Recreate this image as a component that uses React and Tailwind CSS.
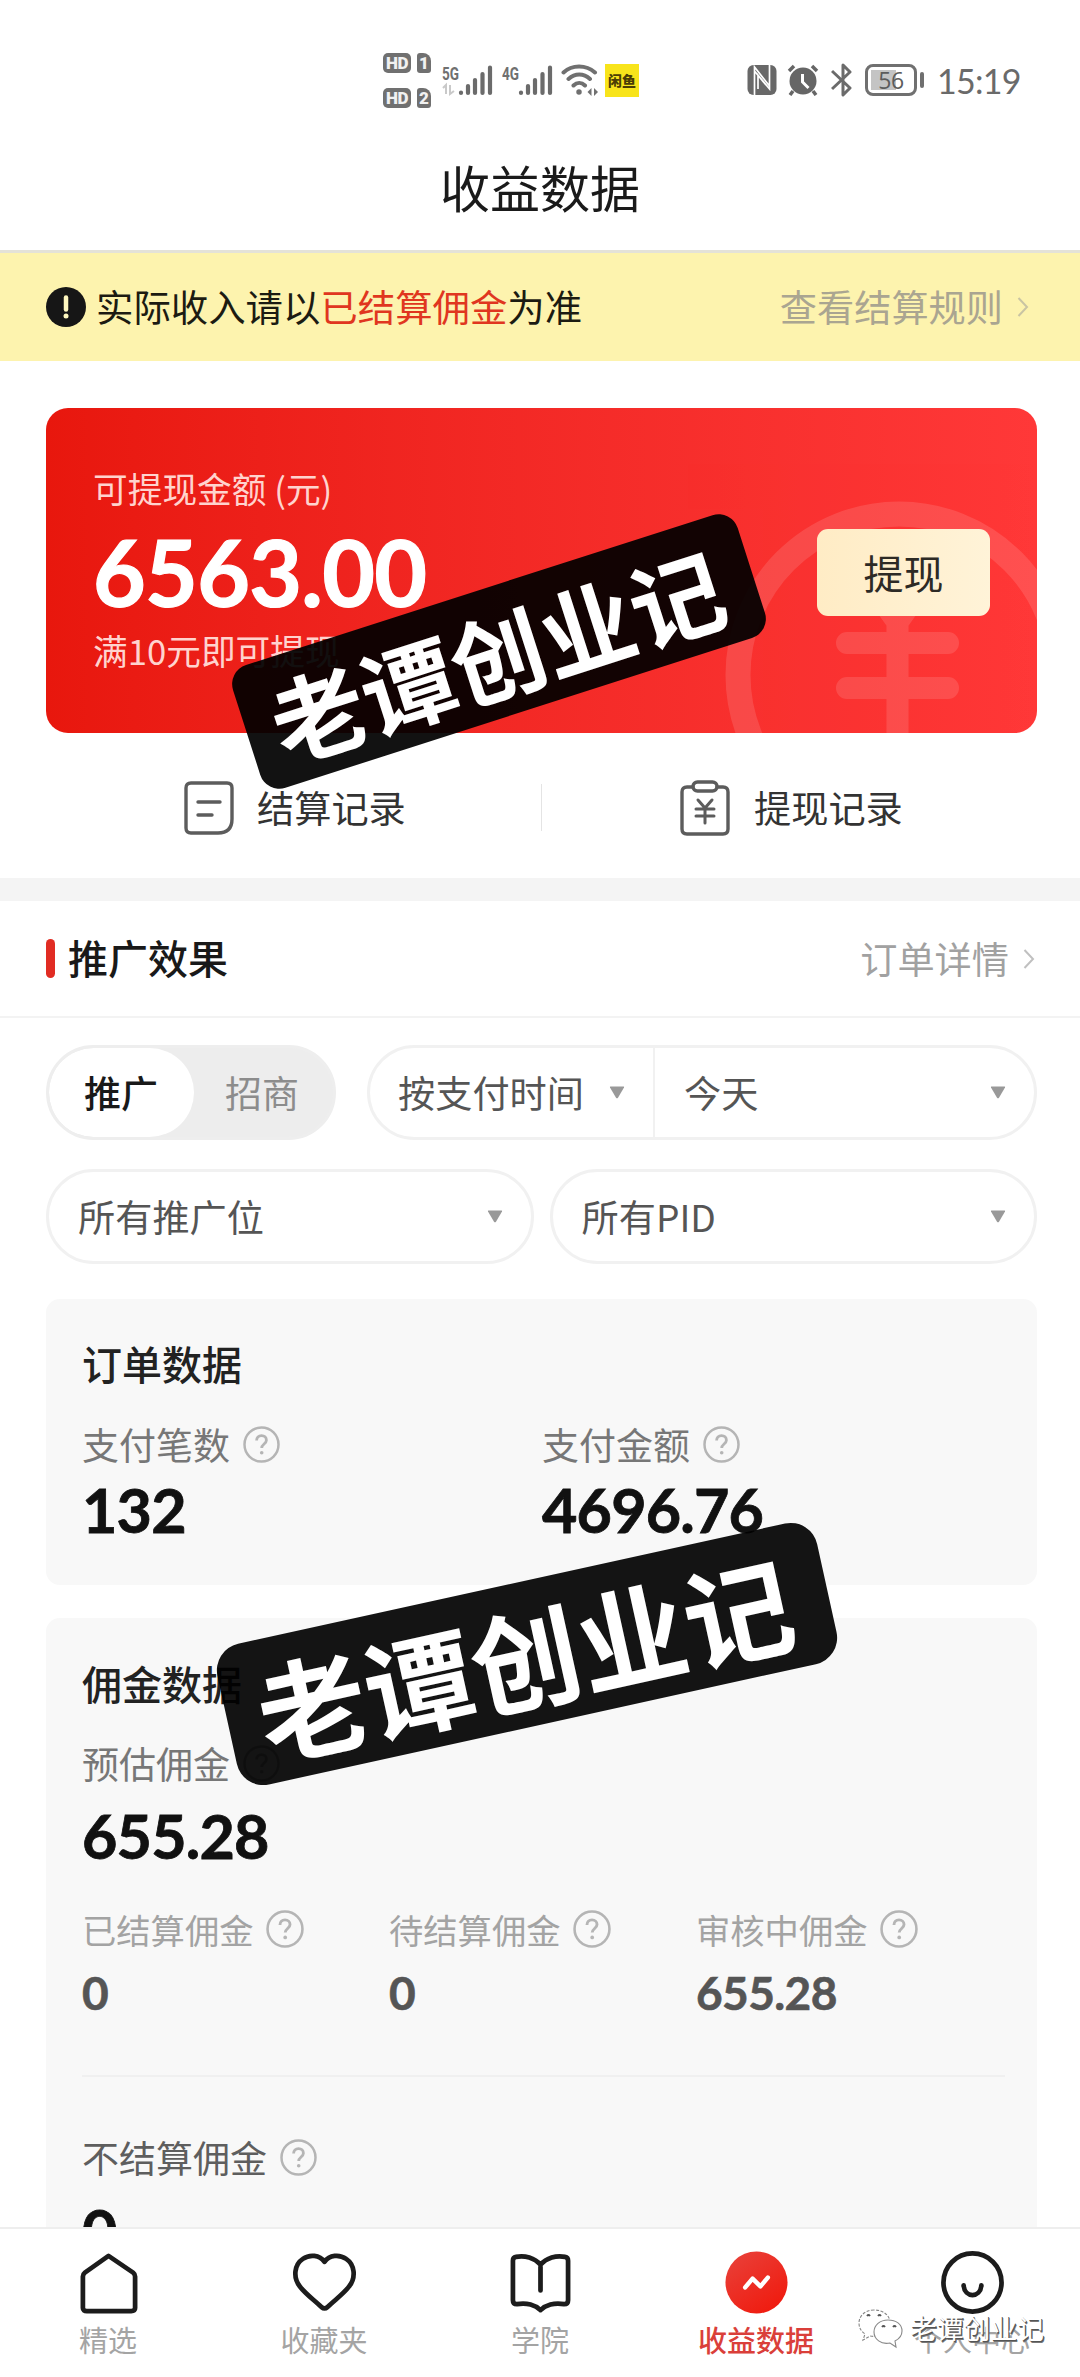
import React from "react";

const Help = ({ className = "ml-[13px] size-[37px]" }) => (
  <svg viewBox="0 0 37 37" className={`shrink-0 ${className}`} fill="none" stroke="#b5b5b5" strokeWidth="2.5">
    <circle cx="18.5" cy="18.5" r="17" />
    <path d="M13.6 14.6c0-3 2-5 4.9-5s4.900 1.900 4.900 4.600c0 3.600-4.700 4.100-4.700 7.800" strokeWidth="2.800" />
    <circle cx="18.700" cy="26.700" r="1.800" fill="#b5b5b5" stroke="none" />
  </svg>
);

const Chevron = ({ stroke }) => (
  <svg viewBox="0 0 12 20" className="ml-[14px] h-5 w-3" fill="none" stroke={stroke} strokeWidth="2">
    <path d="M1.5 1l8.5 9-8.5 9" />
  </svg>
);

const Caret = () => (
  <svg viewBox="0 0 16 13" className="h-[13px] w-4 shrink-0">
    <path d="M1.5 0.5h13q1 0 .5 1L9 11.700q-1 1.200-2 0L1 1.500q-.5-1 .5-1z" fill="#999" />
  </svg>
);

const HdBadge = ({ n }) => (
  <div className="flex gap-[6px] font-['Roboto'] text-[17px] leading-[20px] font-black text-[#f1f1f1]">
    <span className="h-5 w-7 rounded-[5px] bg-[#707070] text-center tracking-[-0.5px]">HD</span>
    <span className="h-5 w-[14px] rounded-[3px] rounded-tr-[8px] bg-[#707070] text-center">{n}</span>
  </div>
);

const Signal = ({ label, arrows }) => (
  <svg viewBox="0 0 51 32" className="h-8 w-[51px]">
    <text x="0" y="15.500" fontSize="18" fontWeight="700" fontFamily="Roboto, sans-serif" textLength="17" lengthAdjust="spacingAndGlyphs" fill="#707070">
      {label}
    </text>
    {arrows && <path d="M1 24l3-3v9M8 21v9l4-3" fill="none" stroke="#c9c9c9" strokeWidth="2" />}
    <g stroke="#6b6b6b" strokeWidth="4.200" strokeLinecap="round">
      <path d="M19 28.500v.5M26 22v7M33 16v13M40.500 10v19M48 3.500v25.500" />
    </g>
  </svg>
);

function StatusBar() {
  return (
    <div className="mt-[46px] flex h-[68px] items-center pr-[59px] pl-[383px]">
      <div className="flex flex-col gap-[15px]">
        <HdBadge n="1" />
        <HdBadge n="2" />
      </div>
      <div className="ml-[11px] flex items-center">
        <Signal label="5G" arrows />
        <div className="ml-[9px] flex">
          <Signal label="4G" />
        </div>
        <svg viewBox="0 0 38 32" className="ml-[8px] h-8 w-[38px]" fill="none" stroke="#707070" strokeWidth="4" strokeLinecap="round">
          <path d="M2.500 8.500C11 .500 25 .500 34 8.500M7.500 15c6.500-6 15-6 21.500 0M12.500 21.500c3.500-3.500 8-3.500 11.500 0" />
          <circle cx="18" cy="28" r="1.500" fill="#707070" strokeWidth="2.500" />
          <path d="M30.500 24l-4 4 4 4zM33 24l4 4-4 4z" fill="#707070" stroke="none" />
        </svg>
        <span className="ml-[6px] flex h-[33px] w-[34px] items-center justify-center bg-[#f8e41b] font-['Noto_Sans_CJK_SC'] text-[14px] leading-none font-black text-[#4b3e05]">
          闲鱼
        </span>
      </div>
      <div className="ml-auto flex items-center">
        <svg viewBox="0 0 30 32" className="h-8 w-[30px]">
          <rect x="0.500" y="1" width="29" height="30" rx="6" fill="#686868" />
          <path d="M7.500 31V7L19 21M22.500 1v24L11 11v14M7.500 7V3l15 19" fill="none" stroke="#fff" strokeWidth="1.700" />
        </svg>
        <svg viewBox="0 0 32 32" className="ml-[10px] h-8 w-8">
          <circle cx="16" cy="17" r="13.500" fill="#666" />
          <path d="M2 7l5-5M25 2l5 5M6 27l-3 4M26 27l3 4" stroke="#666" strokeWidth="3.500" />
          <path d="M15.500 10v8l6 6" fill="none" stroke="#fff" strokeWidth="3" />
        </svg>
        <svg viewBox="0 0 22 34" className="ml-[12px] h-[34px] w-[22px]" fill="none" stroke="#6b6b6b" strokeWidth="3">
          <path d="M1 8l18 17-7 7V2l7 7L1 26" strokeLinejoin="round" />
        </svg>
        <div className="ml-[12px] flex h-8 w-[52px] items-center justify-center rounded-[8px] border-[3px] border-[#707070] bg-[linear-gradient(#c4c4c4,#c4c4c4)] bg-[length:25px_20px] bg-[position:3px_3px] bg-no-repeat font-['Open_Sans'] text-[23px] leading-none tracking-[-0.5px] text-[#5c5c5c]">
          56
        </div>
        <span className="ml-[3px] h-4 w-1 rounded-full bg-[#6f6f6f]" />
        <span className="mt-[2px] ml-[13px] w-[84px] font-['Lato'] text-[34px] leading-none tracking-[-0.7px] whitespace-nowrap text-[#6a6a6a]">15:19</span>
      </div>
    </div>
  );
}

const Pill = ({ text, className = "" }) => (
  <div className={`flex items-center justify-between text-[37.200px] text-[#555] ${className}`}>
    <span>{text}</span>
    <Caret />
  </div>
);

const Metric = ({ label, value, valueClass = "mt-[6px]", labelClass = "text-[#777]" }) => (
  <div>
    <div className={`flex h-[56px] items-center text-[37px] ${labelClass}`}>
      {label}
      <Help />
    </div>
    <div className={`flex h-[63px] items-center font-['Lato'] text-[61px] leading-none font-bold tracking-[-0.8px] text-[#111] [-webkit-text-stroke:0.8px_#111] ${valueClass}`}>
      {value}
    </div>
  </div>
);

const SubMetric = ({ label, value }) => (
  <div>
    <div className="flex h-[50px] items-center text-[34.300px] text-[#a3a3a3]">
      {label}
      <Help className="ml-[12px] size-[38px]" />
    </div>
    <div className="mt-[14px] flex h-[50px] items-center font-['Lato'] text-[46px] leading-none font-bold tracking-[-0.6px] text-[#555] [-webkit-text-stroke:0.6px_#555]">{value}</div>
  </div>
);

const NavItem = ({ label, active, children }) => (
  <div className="flex flex-1 flex-col items-center pt-[21px]">
    <svg viewBox="0 0 66 66" className="size-[65px]" fill="none" stroke="#1c1c1c" strokeWidth="4.800" strokeLinejoin="round" strokeLinecap="round">
      {children}
    </svg>
    <span className={`mt-[7px] text-[29px] leading-[34px] ${active ? "font-medium text-[#da3f3a]" : "text-[#a4a4a4]"}`}>{label}</span>
  </div>
);

export default function App() {
  return (
    <div className="relative flex h-[2377px] w-[1080px] flex-col overflow-hidden bg-white font-['Noto_Sans_CJK_SC',sans-serif] leading-none whitespace-nowrap">
      <header className="flex h-[253px] shrink-0 flex-col border-b-[3px] border-[#e4e2d8]">
        <StatusBar />
        <h1 className="mt-[44px] text-center text-[50px] leading-[56px] text-[#1a1a1a]">收益数据</h1>
      </header>

      <div className="flex h-[108px] shrink-0 items-center bg-[#fdf3ae] pr-[51px] pl-[46px] text-[37.400px]">
        <svg viewBox="0 0 40 40" className="mr-[10px] size-10">
          <circle cx="20" cy="20" r="20" fill="#161616" />
          <path d="M20 10.500v12" stroke="#fff8c0" strokeWidth="4.500" strokeLinecap="round" />
          <circle cx="20" cy="29" r="2.500" fill="#fff8c0" />
        </svg>
        <span className="text-[#1c1b12]">
          实际收入请以<span className="text-[#e0361f]">已结算佣金</span>为准
        </span>
        <span className="ml-auto text-[37.200px] text-[#aaa591]">查看结算规则</span>
        <Chevron stroke="#c9c4a3" />
      </div>

      <section className="pt-[47px] pr-[43px] pl-[46px]">
        <div className="relative flex h-[325px] items-center justify-between overflow-hidden rounded-[22px] bg-linear-to-r from-[#e8170d] to-[#ff3838] pr-[47px] pl-[47px]">
          <svg viewBox="0 0 360 240" className="absolute right-0 bottom-0 h-[240px] w-[360px] opacity-[.12]" fill="none" stroke="#fff">
            <path d="M61 182a161 161 0 0 1 322 0a161 161 0 0 1-322 0" strokeWidth="25" />
            <path d="M170 150h101M170 195h101M220.500 126v124M182 75l38.500 54L259 75" strokeWidth="22" strokeLinejoin="round" strokeLinecap="round" />
          </svg>
          <div className="-mt-[3px] text-[34.700px] text-[#ffd3ce]">
            <div className="leading-[40px]">可提现金额 (元)</div>
            <div className="mt-[18px] font-['Lato'] text-[91px] leading-[92px] font-bold tracking-[-0.7px] text-white [-webkit-text-stroke:1.200px_white]">6563.00</div>
            <div className="mt-[12px] leading-[40px]">满10元即可提现</div>
          </div>
          <div className="relative mt-[3px] flex h-[87px] w-[173px] items-center justify-center rounded-[11px] bg-linear-to-r from-[#ffecc5] to-[#fff3d8] text-[40px] text-[#2d2a25]">
            提现
          </div>
        </div>
      </section>

      <div className="flex h-[145px] shrink-0 items-center pt-[4px] text-[37.200px] text-[#333]">
        <div className="flex w-[541px] items-center pl-[184px]">
          <svg viewBox="0 0 50 54" className="mr-[23px] h-[54px] w-[50px]" fill="none" stroke="#5c5c5c" strokeWidth="3.400" strokeLinecap="round">
            <path d="M7 2h36q5 0 5 5v31q0 14-14 14H7q-5 0-5-5V7q0-5 5-5z" />
            <path d="M14 21h22M14 34h14" />
          </svg>
          结算记录
        </div>
        <div className="h-[47px] w-px bg-[#e4e4e4]" />
        <div className="flex items-center pl-[138px]">
          <svg viewBox="0 0 50 56" className="mr-[24px] h-14 w-[50px]" fill="none" stroke="#5c5c5c" strokeWidth="3.400" strokeLinecap="round" strokeLinejoin="round">
            <path d="M13 7H7Q2 7 2 12v37q0 5 5 5h36q5 0 5-5V12q0-5-5-5h-6" />
            <rect x="13" y="2" width="24" height="9" rx="4.500" />
            <path d="M18 20l7 8 7-8M16 29h18M16 36h18M25 28v15" strokeWidth="3" />
          </svg>
          提现记录
        </div>
      </div>

      <div className="h-[23px] shrink-0 bg-[#f4f4f4]" />

      <div className="flex h-[117px] shrink-0 items-center border-b-2 border-[#f3f3f3] pr-[45px] pl-[46px]">
        <span className="h-[39px] w-[9px] rounded-full bg-[#e12c23]" />
        <h2 className="-mt-[3px] ml-[13px] text-[40px] font-medium text-[#191919]">推广效果</h2>
        <span className="ml-auto text-[37.200px] text-[#a1a1a1]">订单详情</span>
        <Chevron stroke="#c0c0c0" />
      </div>

      <div className="flex flex-col gap-[29px] pt-[27px] pr-[43px] pl-[46px]">
        <div className="flex h-[95px] gap-[31px]">
          <div className="flex w-[290px] items-center overflow-hidden rounded-full border-[3px] border-[#eee] bg-[#ededed] text-[37px]">
            <span className="flex h-full w-[145px] items-center rounded-full bg-white pl-[35px] font-medium text-[#191919]">推广</span>
            <span className="ml-[31px] text-[#8c8c8c]">招商</span>
          </div>
          <div className="flex flex-1 rounded-full border-[3px] border-[#f1f1f1]">
            <Pill text="按支付时间" className="w-[285px] border-r-2 border-[#f1f1f1] pr-[28px] pl-[28px]" />
            <Pill text="今天" className="flex-1 pr-[28px] pl-[29px]" />
          </div>
        </div>
        <div className="flex h-[95px] gap-[16px]">
          <Pill text="所有推广位" className="flex-1 rounded-full border-[3px] border-[#f1f1f1] pr-[28px] pl-[29px]" />
          <Pill text="所有PID" className="flex-1 rounded-full border-[3px] border-[#f1f1f1] pr-[28px] pl-[29px]" />
        </div>
      </div>

      <section className="mt-[35px] mr-[43px] ml-[46px] h-[286px] shrink-0 rounded-[14px] bg-[#f8f8f8] px-9 pt-[39px]">
        <h2 className="text-[40px] leading-[50px] font-medium text-[#222]">订单数据</h2>
        <div className="mt-[28px] grid grid-cols-[460px_1fr]">
          <Metric label="支付笔数" value="132" />
          <Metric label="支付金额" value="4696.76" />
        </div>
      </section>

      <section className="mt-[33px] mr-[43px] ml-[46px] h-[609px] shrink-0 overflow-hidden rounded-t-[14px] bg-[#f8f8f8] pt-[40px] pr-[32px] pl-9">
        <h2 className="text-[40px] leading-[50px] font-medium text-[#222]">佣金数据</h2>
        <div className="mt-[27px]">
          <Metric label="预估佣金" value="655.28" valueClass="mt-[13px]" />
        </div>
        <div className="mt-[37px] grid grid-cols-[307px_307px_1fr]">
          <SubMetric label="已结算佣金" value="0" />
          <SubMetric label="待结算佣金" value="0" />
          <SubMetric label="审核中佣金" value="655.28" />
        </div>
        <div className="mt-[57px] h-[2px] bg-[#f0f0f0]" />
        <div className="mt-[52px]">
          <Metric label="不结算佣金" value="0" valueClass="mt-[14px]" labelClass="text-[#5e5e5e]" />
        </div>
      </section>

      <nav className="relative flex h-[151px] shrink-0 border-t-2 border-[#eee] bg-white">
        <NavItem label="精选">
          <path d="M33 6L58 23q2 1.500 2 4v32q0 3-4 3H11q-4 0-4-3V27q0-2.500 2-4z" />
        </NavItem>
        <NavItem label="收藏夹">
          <path d="M33 12C28 5 18 4 11 9 2 15 1 28 8 37c6 8 15 14 22 21q3 2.500 6 0c7-7 16-13 22-21 7-9 6-22-3-28-7-5-17-4-22 3z" />
        </NavItem>
        <NavItem label="学院">
          <path d="M33 15C27 8 17 5 8 7q-3 .500-3 4v40q0 4 4 4c10-2 19 1 24 6 5-5 14-8 24-6q4 0 4-4V11q0-3.500-3-4C49 5 39 8 33 15zM33 17v24" />
        </NavItem>
        <NavItem label="收益数据" active>
          <defs>
            <linearGradient id="activeDisc" x1="0" y1="0" x2=".7" y2="1">
              <stop stopColor="#e8433c" />
              <stop offset="1" stopColor="#f01b0f" />
            </linearGradient>
          </defs>
          <circle cx="33" cy="33" r="31.500" fill="url(#activeDisc)" stroke="none" />
          <path d="M21.500 38l7.500-9 8 8 7.500-9" stroke="#fff" strokeWidth="4.500" />
        </NavItem>
        <NavItem label="个人中心">
          <circle cx="33" cy="33" r="29.500" />
          <path d="M24 36c1 13 17 13 18 0" />
        </NavItem>
        <div className="absolute top-[78px] left-[857px] flex items-center">
          <svg viewBox="0 0 48 42" className="mr-[5px] h-[42px] w-12" fill="#fff" stroke="#888" strokeWidth="1.100">
            <path d="M17 3C8 3 2 9 2 16c0 5 2 8 6 11l-2 6 7-4c10 2 20-3 20-13C33 8 26 3 17 3z" strokeDasharray="3 1.500" />
            <path d="M31 13c-8 0-14 5-14 12s7 13 16 11l6 4-1-6c4-2 7-6 7-10 0-7-6-11-14-11z" />
            <path d="M10 9q1.500-2 3 0M21 9q1.500-2 3 0M25 20q1.500-2 3 0M36 20q1.500-2 3 0" stroke="#555" strokeWidth="1.800" />
          </svg>
          <span className="text-[26.800px] leading-[42px] text-white [text-shadow:1px_1px_0_#555,1.500px_1.500px_0_#777]">老谭创业记</span>
        </div>
      </nav>

      <div className="absolute top-[587px] left-[234px] flex h-[129px] w-[530px] rotate-[-17.8deg] items-center justify-center rounded-[20px] bg-black/93 pr-[6px] text-[94px] font-bold text-white">
        老谭创业记
      </div>
      <div className="absolute top-[1582px] left-[220px] flex h-[144px] w-[614px] rotate-[-12.4deg] items-center justify-center rounded-[27px] bg-black/92 pr-[6px] text-[109px] font-bold text-white">
        老谭创业记
      </div>
    </div>
  );
}
